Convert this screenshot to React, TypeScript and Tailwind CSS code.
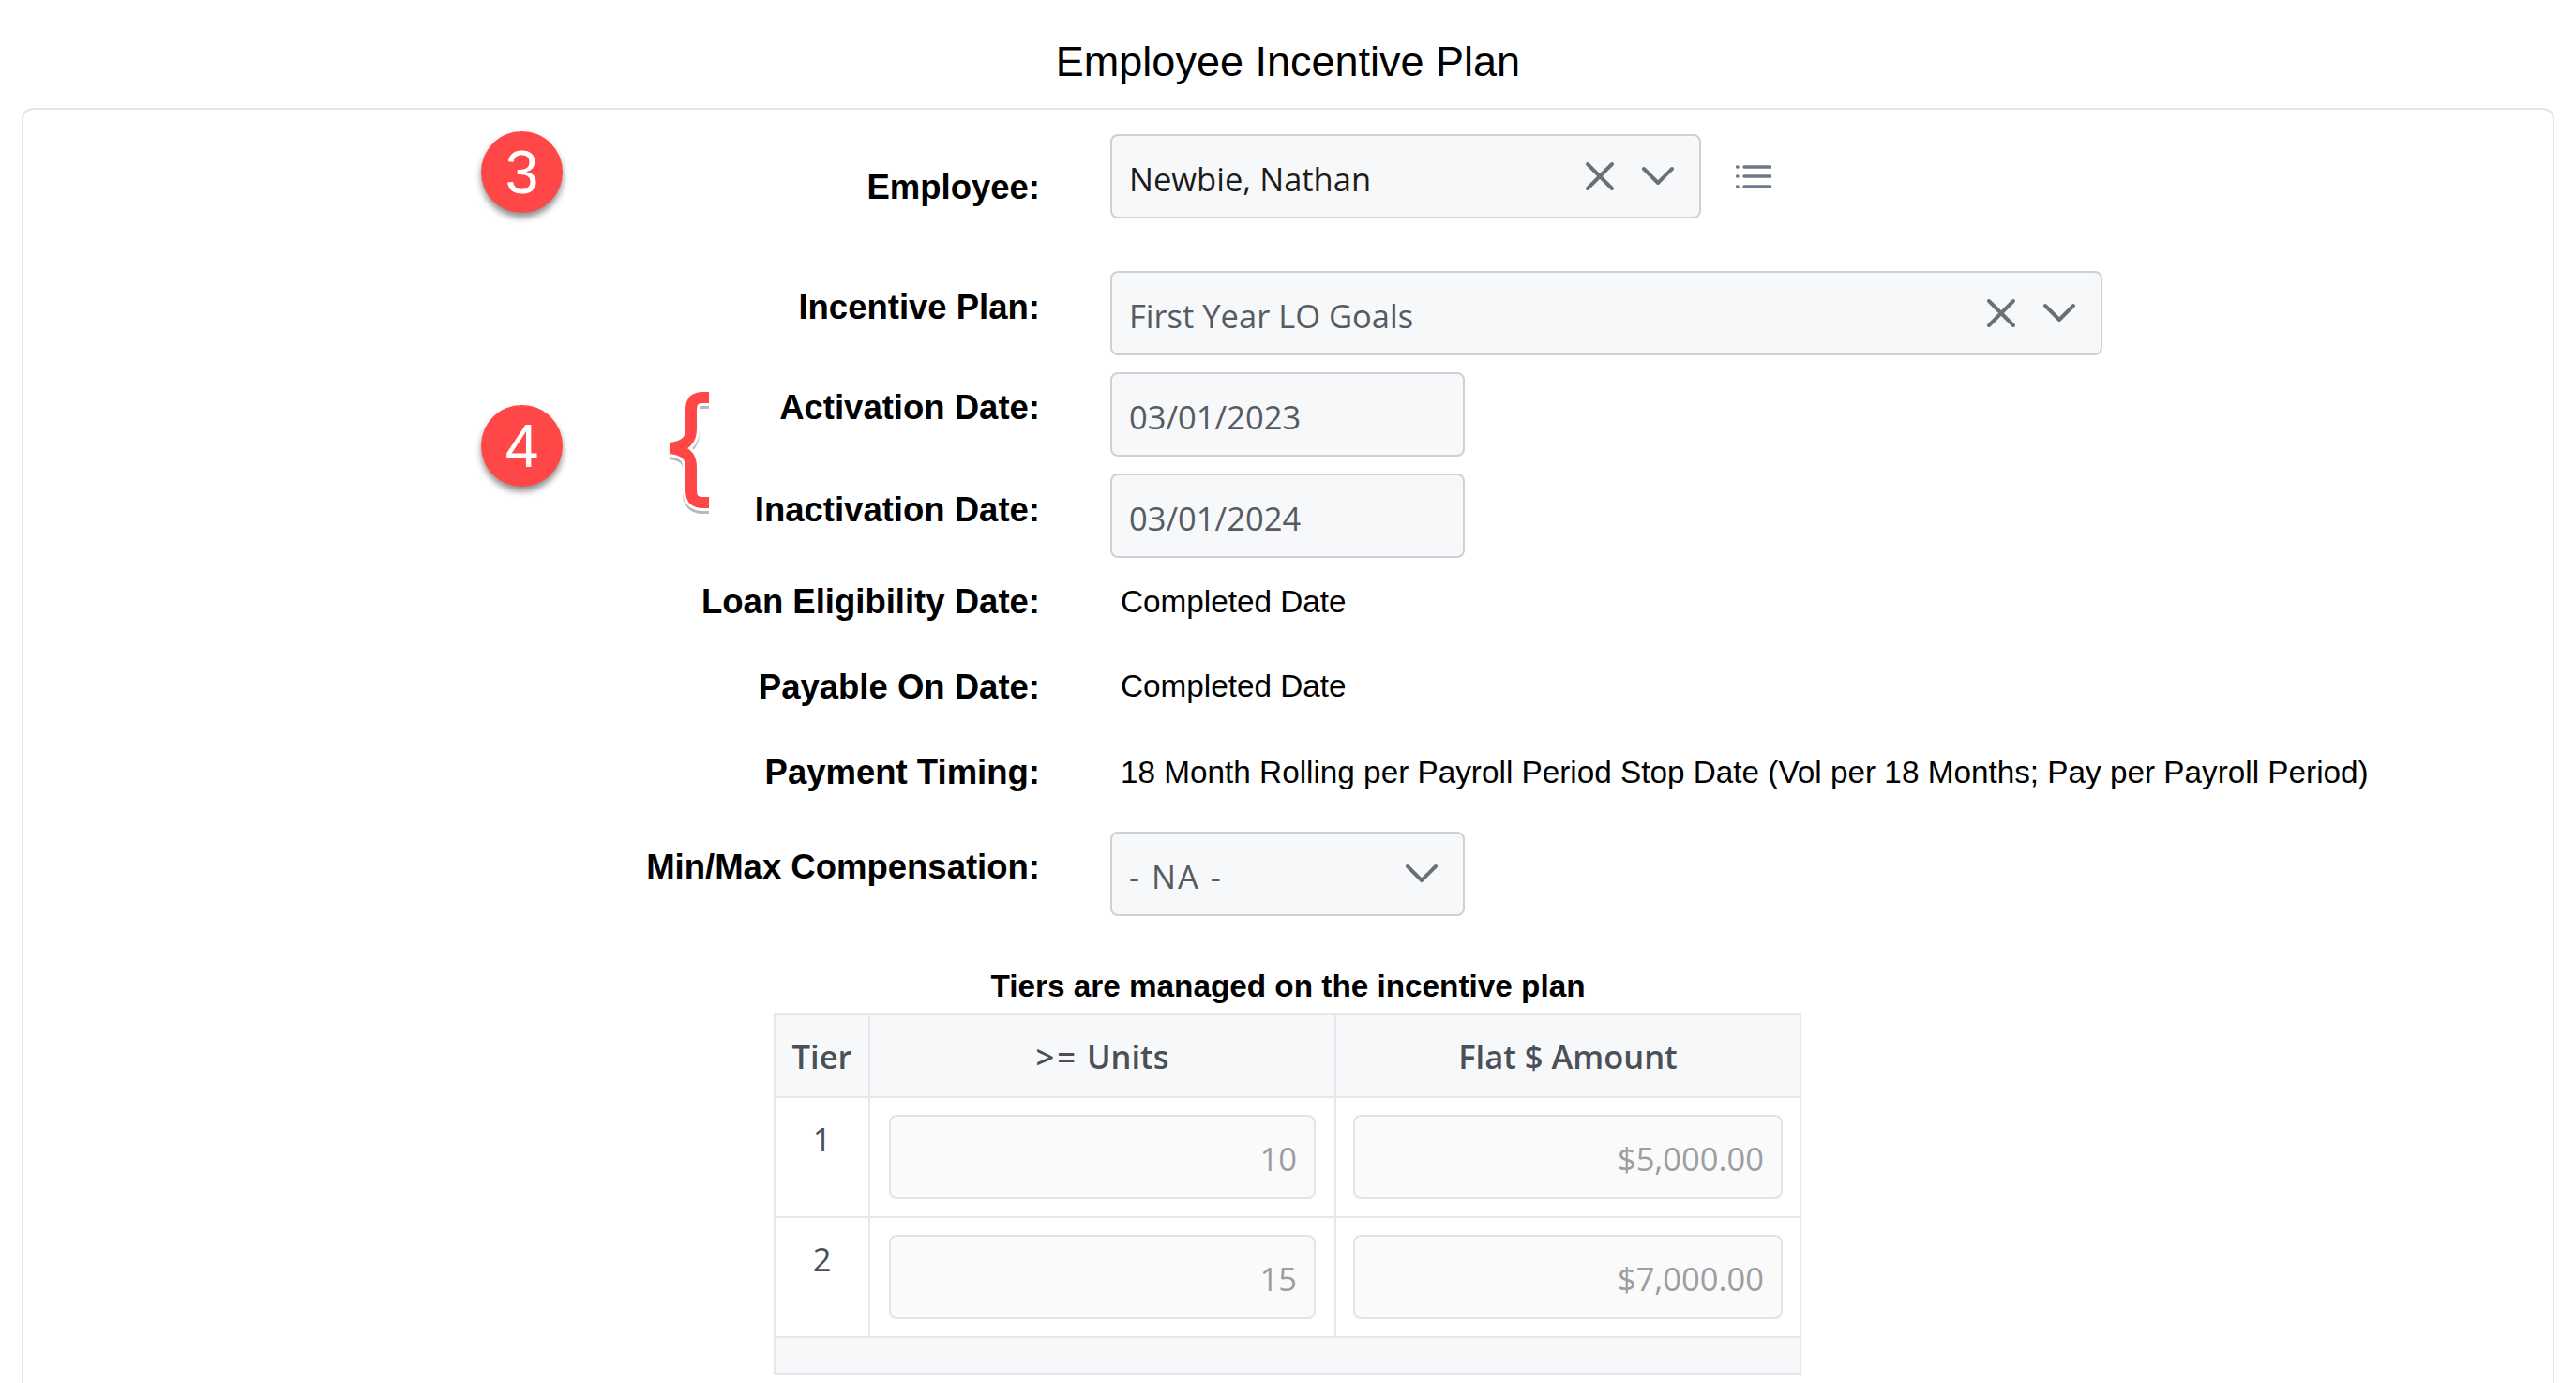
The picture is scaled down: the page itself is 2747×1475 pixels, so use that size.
const arial = "font-['Liberation_Sans',Arial,sans-serif]";

function XIcon() {
    return (
        <svg width="32" height="32" viewBox="0 0 32 32" fill="none" stroke="#6b7078" strokeWidth="4" strokeLinecap="round" className="shrink-0">
            <path d="M3 3 L29 29 M29 3 L3 29" />
        </svg>
    );
}

function ChevronIcon() {
    return (
        <svg width="36" height="22" viewBox="0 0 36 22" fill="none" stroke="#6b7078" strokeWidth="4" strokeLinecap="round" strokeLinejoin="round" className="shrink-0">
            <path d="M3 3 L18 18 L33 3" />
        </svg>
    );
}

function ListIcon() {
    return (
        <svg width="38" height="26" viewBox="0 0 38 26" fill="none" stroke="#6b7a88" strokeWidth="3.5" strokeLinecap="round" className="shrink-0">
            <path d="M9 3 H37 M9 13 H37 M9 24 H37 M1.7 3 H2 M1.7 13 H2 M1.7 24 H2" />
        </svg>
    );
}

function Badge({ n, className }: { n: string; className: string }) {
    return (
        <div className={`absolute left-[488px] flex h-[87px] w-[87px] items-center justify-center rounded-full bg-[#ff4747] text-[64px] leading-none text-white shadow-[0_5px_7px_rgba(0,0,0,0.45)] ${arial} ${className}`}>
            {n}
        </div>
    );
}

const bracePath = 'M46 10 H40 C31 10 27 14 27 23 V44 C27 56 20 62 5 64 C20 66 27 72 27 84 V109 C27 118 31 122 40 122 H46';

function Brace() {
    return (
        <svg width="52" height="140" viewBox="0 0 52 140" fill="none" className="absolute left-[685px] top-[297px]">
            <path d={bracePath} stroke="#000" strokeOpacity="0.28" strokeWidth="18" transform="translate(0 3)" />
            <path d={bracePath} stroke="#fff" strokeWidth="18" />
            <path d={bracePath} stroke="#ff4747" strokeWidth="12" />
        </svg>
    );
}

function Label({ children, className }: { children: string; className: string }) {
    return (
        <div className={`w-[1084px] shrink-0 text-right text-[36.5px] font-bold leading-[50px] text-black ${arial} ${className}`}>
            {children}
        </div>
    );
}

function Field({ value, className, valueClass, dark, clear, arrow }: { value: string; className: string; valueClass?: string; dark?: boolean; clear?: boolean; arrow?: boolean }) {
    return (
        <div className={`flex h-[90px] shrink-0 items-center rounded-lg border-2 border-[#cdd0d6] bg-[#f7f8fa] pl-[18px] pr-[26px] ${className}`}>
            <span className={`flex-1 pt-[6px] font-['Open_Sans',sans-serif] text-[34.5px] leading-none ${dark ? 'text-[#1c1c1c]' : 'text-[#565b62]'} ${valueClass ?? ''}`}>
                {value}
            </span>
            {clear && <XIcon />}
            {arrow && (
                <span className="ml-[28px]">
                    <ChevronIcon />
                </span>
            )}
        </div>
    );
}

function TextValue({ children }: { children: string }) {
    return <div className={`ml-[86px] text-[33.3px] leading-[50px] text-black ${arial}`}>{children}</div>;
}

function TierInput({ value }: { value: string }) {
    return (
        <div className="flex h-[90px] items-center justify-end rounded-lg border-2 border-[#e3e4e7] bg-[#fafafa] px-[18px] pt-[4px] font-['Open_Sans',sans-serif] text-[34.5px] leading-none text-[#9b9ea2]">
            {value}
        </div>
    );
}

const tiers = [
    { tier: '1', units: '10', amount: '$5,000.00' },
    { tier: '2', units: '15', amount: '$7,000.00' },
];

export default function App() {
    return (
        <div className="flex h-[1475px] flex-col overflow-hidden bg-white px-[23px]">
            {/* Title */}
            <div className={`flex h-[115px] shrink-0 items-center justify-center pt-[16px] text-[45px] text-black ${arial}`}>
                Employee Incentive Plan
            </div>

            <div className="relative flex-1 rounded-t-xl border-2 border-b-0 border-[#e4e5e9] pt-[26px]">
                <Badge n="3" className="top-[23px]" />
                <Badge n="4" className="top-[315px]" />
                <Brace />

                <div className="flex items-start">
                    <Label className="pt-[32px]">Employee:</Label>
                    <div className="ml-[75px] flex items-center">
                        <Field value="Newbie, Nathan" className="w-[630px]" dark clear arrow />
                        <span className="ml-[37px]">
                            <ListIcon />
                        </span>
                    </div>
                </div>

                <div className="mt-[56px] flex items-start">
                    <Label className="pt-[14px]">Incentive Plan:</Label>
                    <div className="ml-[75px]">
                        <Field value="First Year LO Goals" className="w-[1058px]" clear arrow />
                    </div>
                </div>

                <div className="mt-[18px] flex items-start">
                    <Label className="pt-[13px]">Activation Date:</Label>
                    <div className="ml-[75px]">
                        <Field value="03/01/2023" className="w-[378px]" />
                    </div>
                </div>

                <div className="mt-[18px] flex items-start">
                    <Label className="pt-[14px]">Inactivation Date:</Label>
                    <div className="ml-[75px]">
                        <Field value="03/01/2024" className="w-[378px]" />
                    </div>
                </div>

                <div className="mt-[22px] flex items-start">
                    <Label className="pt-0">Loan Eligibility Date:</Label>
                    <TextValue>Completed Date</TextValue>
                </div>

                <div className="mt-[40px] flex items-start">
                    <Label className="pt-[1px]">Payable On Date:</Label>
                    <TextValue>Completed Date</TextValue>
                </div>

                <div className="mt-[41px] flex items-start">
                    <Label className="pt-0">Payment Timing:</Label>
                    <TextValue>18 Month Rolling per Payroll Period Stop Date (Vol per 18 Months; Pay per Payroll Period)</TextValue>
                </div>

                <div className="mt-[38px] flex items-start">
                    <Label className="pt-[13px]">Min/Max Compensation:</Label>
                    <div className="ml-[75px]">
                        <Field value="- NA -" className="w-[378px]" valueClass="tracking-[2px]" arrow />
                    </div>
                </div>

                {/* Tiers */}
                <div className={`mt-[55px] text-center text-[33.3px] font-bold leading-[40px] text-black ${arial}`}>
                    Tiers are managed on the incentive plan
                </div>
                <table className="ml-[800px] mt-[8px] w-[1094px] table-fixed border-collapse font-['Open_Sans',sans-serif] text-[34.5px] text-[#4a5057]">
                    <colgroup>
                        <col className="w-[101px]" />
                        <col className="w-[497px]" />
                        <col className="w-[496px]" />
                    </colgroup>
                    <thead>
                        <tr className="h-[89px] bg-[#f7f8fa]">
                            <th className="border-2 border-[#e6e7ea] pt-[2px] font-semibold">Tier</th>
                            <th className="border-2 border-[#e6e7ea] pt-[2px] font-semibold">
                                <span className="tracking-[3px]">&gt;=</span> Units
                            </th>
                            <th className="border-2 border-[#e6e7ea] pt-[2px] font-semibold">Flat $ Amount</th>
                        </tr>
                    </thead>
                    <tbody>
                        {tiers.map((row) => (
                            <tr key={row.tier} className="h-[128px]">
                                <td className="border-2 border-[#e6e7ea] pt-[18px] text-center align-top">{row.tier}</td>
                                <td className="border-2 border-[#e6e7ea] px-[20px] align-middle">
                                    <TierInput value={row.units} />
                                </td>
                                <td className="border-2 border-[#e6e7ea] px-[18px] align-middle">
                                    <TierInput value={row.amount} />
                                </td>
                            </tr>
                        ))}
                        <tr className="h-[39px] bg-[#f7f8fa]">
                            <td colSpan={3} className="border-2 border-[#e6e7ea]"></td>
                        </tr>
                    </tbody>
                </table>
            </div>
        </div>
    );
}
